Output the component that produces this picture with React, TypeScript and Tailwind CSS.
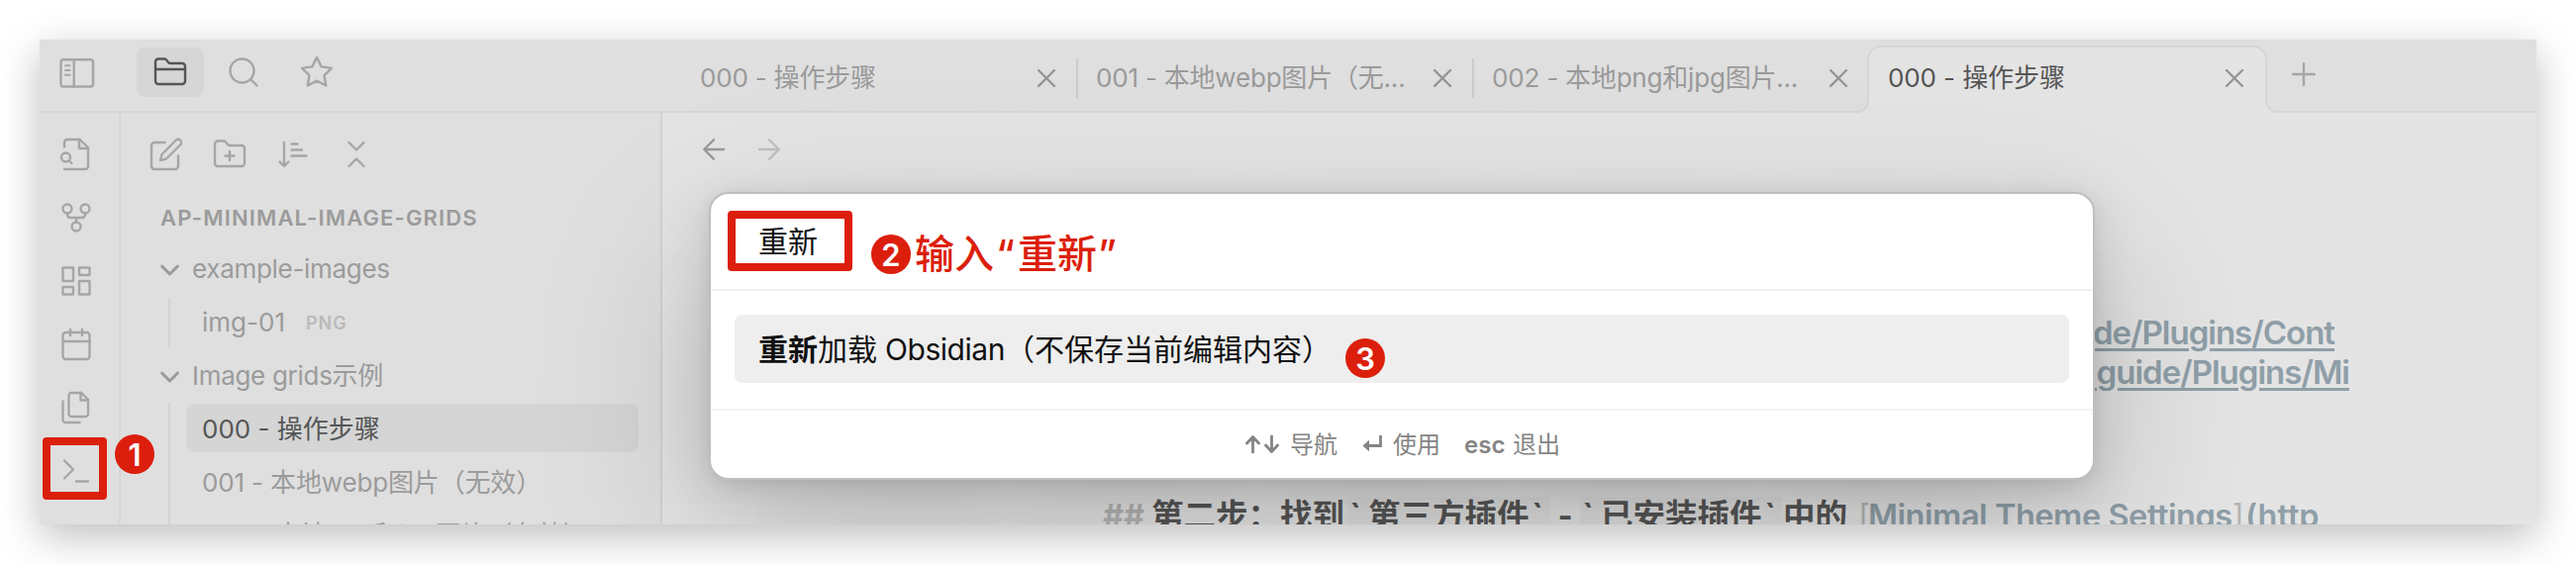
import React from "react";

type IconProps = { children: React.ReactNode; className?: string; sw?: number };

function Icon({ children, className = "size-[36px]", sw = 1.6 }: IconProps) {
  return (
    <svg
      className={"shrink-0 " + className}
      viewBox="0 0 24 24"
      fill="none"
      stroke="currentColor"
      strokeWidth={sw}
      strokeLinecap="round"
      strokeLinejoin="round"
    >
      {children}
    </svg>
  );
}

function Close() {
  return (
    <Icon className="size-[32px] text-[#959595]" sw={1.8}>
      <path d="M18 6 6 18M6 6l12 12" />
    </Icon>
  );
}

function Tab({ title, sep }: { title: string; sep?: boolean }) {
  return (
    <div className="relative flex h-full w-[400px] shrink-0 items-center justify-between pl-[19px] pr-[15px] text-[#9a9a9a]">
      <span className="whitespace-nowrap text-[26px] leading-[36px] tracking-[-0.2px]">{title}</span>
      <Close />
      {sep && <span className="absolute right-[-1px] top-[19px] h-[40px] w-[2px] bg-[#cbcbcb]" />}
    </div>
  );
}

function ActiveTab({ title }: { title: string }) {
  return (
    <div className="relative h-full w-[400px] shrink-0">
      <div className="absolute left-[-2px] top-[6px] h-[68px] w-[404px] rounded-t-[14px] border-2 border-b-0 border-[#d6d6d6] bg-[#e4e4e4]" />
      <div className="absolute left-[-12px] top-[62px] h-[12px] w-[12px] bg-[#e4e4e4]">
        <div className="h-full w-full rounded-br-[12px] border-b-2 border-r-2 border-[#d6d6d6] bg-[#dedede]" />
      </div>
      <div className="absolute right-[-12px] top-[62px] h-[12px] w-[12px] bg-[#e4e4e4]">
        <div className="h-full w-full rounded-bl-[12px] border-b-2 border-l-2 border-[#d6d6d6] bg-[#dfdfdf]" />
      </div>
      <div className="relative flex h-full items-center justify-between pl-[19px] pr-[15px] text-[#555]">
        <span className="whitespace-nowrap text-[26px] leading-[36px] tracking-[-0.1px]">{title}</span>
        <Close />
      </div>
    </div>
  );
}

function Badge({ n, className }: { n: string; className: string }) {
  return (
    <span className={"absolute flex size-[40px] items-center justify-center rounded-full bg-[#dc1f0d] text-[31px] font-semibold leading-none text-white " + className}>
      {n}
    </span>
  );
}

function Folder({ name }: { name: string }) {
  return (
    <div className="flex h-[54px] items-center pl-[36px]">
      <Icon className="size-[27px]" sw={2.6}>
        <path d="m5 9 7 7 7-7" />
      </Icon>
      <span className="-mt-px ml-[9px] whitespace-nowrap tracking-[-0.3px]">{name}</span>
    </div>
  );
}

function Code({ text }: { text: string }) {
  return (
    <span className="flex w-[205px] items-baseline bg-black/[0.02]">
      <span className="w-[21px] pr-[5px] text-center">`</span>
      <span className="w-[163px]">{text}</span>
      <span className="w-[21px] pr-[5px] text-center">`</span>
    </span>
  );
}

export default function App() {
  return (
    <div className="h-[570px] w-[2602px] overflow-hidden bg-white p-[40px] font-['Inter','Noto_Sans_CJK_SC',sans-serif]">
      <div className="h-[490px] w-[2522px] shadow-[0_12px_39px_rgba(0,0,0,0.26)]">
        <div className="relative flex h-full w-full flex-col overflow-hidden bg-[#dfdfdf]">
          <header className="flex h-[74px] shrink-0 border-b-2 border-[#d6d6d6]">
            <div className="flex w-[648px] shrink-0 items-start text-[#a6a6a6]">
              <svg className="ml-[19px] mt-[18px] h-[32px] w-[38px]" viewBox="0 0 38 32" fill="none" stroke="currentColor" strokeWidth="2.4" strokeLinecap="round">
                <rect x="2.500" y="2.200" width="32.500" height="27.300" rx="2.500" />
                <path d="M15.700 2.200v27.300" />
                <path d="M7 8.300h4.500M7 13h4.500M7 17.700h4.500" strokeWidth="2" />
              </svg>
              <div className="ml-[41px] mt-[8px] flex h-[50px] w-[68px] items-center justify-center rounded-[8px] bg-[#d6d6d6] text-[#555]">
                <Icon>
                  <path d="M4 20h16a2 2 0 0 0 2-2V8a2 2 0 0 0-2-2h-7.930a2 2 0 0 1-1.660-.9l-.82-1.200A2 2 0 0 0 7.930 3H4a2 2 0 0 0-2 2v13c0 1.100.9 2 2 2ZM2 10h20" />
                </Icon>
              </div>
              <Icon className="ml-[22px] mt-[15px] size-[36px]">
                <circle cx="11" cy="11" r="8" />
                <path d="m21 21-4.300-4.300" />
              </Icon>
              <Icon className="ml-[38px] mt-[15px] size-[36px]">
                <polygon points="12 2 15.09 8.26 22 9.27 17 14.14 18.18 21.02 12 17.77 5.82 21.02 7 14.14 2 9.27 8.91 8.26 12 2" />
              </Icon>
            </div>
            <div className="flex h-[78px] items-center">
              <Tab title="000 - 操作步骤" sep />
              <Tab title="001 - 本地webp图片（无..." sep />
              <Tab title="002 - 本地png和jpg图片..." />
              <ActiveTab title="000 - 操作步骤" />
              <Icon className="-mt-[8px] ml-[21px] size-[36px] text-[#a6a6a6]">
                <path d="M12 4.800v14.400M4.800 12h14.400" />
              </Icon>
            </div>
          </header>

          <div className="flex min-h-0 flex-1">
            <nav className="flex w-[82px] shrink-0 flex-col gap-[28px] border-r-2 border-[#d6d6d6] pl-[19px] pt-[24px] text-[#a6a6a6]">
              <Icon>
                <path d="M4 22h14a2 2 0 0 0 2-2V7.500L14.500 2H6a2 2 0 0 0-2 2v3" />
                <path d="M14 2v6h6" />
                <path d="M5 17a3 3 0 1 0 0-6 3 3 0 0 0 0 6zM9 18l-1.500-1.500" />
              </Icon>
              <Icon>
                <circle cx="12" cy="18" r="3" />
                <circle cx="6" cy="6" r="3" />
                <circle cx="18" cy="6" r="3" />
                <path d="M18 9v1a2 2 0 0 1-2 2H8a2 2 0 0 1-2-2V9M12 12v3" />
              </Icon>
              <Icon>
                <rect x="3" y="3" width="7" height="9" />
                <rect x="14" y="3" width="7" height="5" />
                <rect x="14" y="12" width="7" height="9" />
                <rect x="3" y="16" width="7" height="5" />
              </Icon>
              <Icon>
                <rect x="3" y="4" width="18" height="18" rx="2" />
                <path d="M16 2v4M8 2v4M3 10h18" />
              </Icon>
              <Icon>
                <path d="M15.500 2H8.600c-.4 0-.8.2-1.100.5-.3.3-.5.7-.5 1.100v12.800c0 .4.2.8.5 1.100.3.3.7.5 1.100.5h9.800c.4 0 .8-.2 1.100-.5.3-.3.5-.7.5-1.100V6.500L15.500 2z" />
                <path d="M3 7.600v12.800c0 .4.2.8.5 1.100.3.3.7.5 1.100.5h9.800M15 2v5h5" />
              </Icon>
              <Icon>
                <path d="m4 17 6-6-6-6M12 19h8" />
              </Icon>
            </nav>

            <aside className="w-[547px] shrink-0 border-r-2 border-[#d2d2d2] text-[26px] text-[#9b9b9b]">
              <div className="flex gap-[28px] pl-[28px] pt-[24px] text-[#a6a6a6]">
                <Icon>
                  <path d="M11 4H4a2 2 0 0 0-2 2v14a2 2 0 0 0 2 2h14a2 2 0 0 0 2-2v-7" />
                  <path d="M18.500 2.500a2.121 2.121 0 0 1 3 3L12 15l-4 1 1-4 9.500-9.500z" />
                </Icon>
                <Icon>
                  <path d="M4 20h16a2 2 0 0 0 2-2V8a2 2 0 0 0-2-2h-7.930a2 2 0 0 1-1.660-.9l-.82-1.200A2 2 0 0 0 7.930 3H4a2 2 0 0 0-2 2v13c0 1.100.9 2 2 2ZM12 10v6M9 13h6" />
                </Icon>
                <Icon>
                  <path d="m3 17 3 3 3-3M6 19V4M11 5h4M11 9h7M11 13h10" />
                </Icon>
                <Icon>
                  <path d="m7 20 5-5 5 5M7 4l5 5 5-5" />
                </Icon>
              </div>
              <div className="mt-[30px] pl-[40px] text-[22px] font-semibold leading-[32px] tracking-[1.15px]">AP-MINIMAL-IMAGE-GRIDS</div>
              <div className="mt-[9px]">
                <Folder name="example-images" />
                <div className="flex h-[54px] items-stretch pl-[48px]">
                  <div className="my-[2px] w-[2px] bg-[#d3d3d3]" />
                  <div className="flex items-center pb-[2px] pl-[32px]">
                    <span>img-01</span>
                    <span className="ml-[21px] mt-[3px] text-[18px] font-semibold tracking-[1px] text-[#bababa]">PNG</span>
                  </div>
                </div>
                <Folder name="Image grids示例" />
                <div className="flex pl-[48px]">
                  <div className="h-[150px] w-[2px] bg-[#d3d3d3]" />
                  <div className="pl-[16px] pt-[1px]">
                    <div className="flex h-[49px] w-[457px] items-center rounded-[8px] bg-[#d5d5d5] pl-[16px] pt-[2px] text-[#555]">000 - 操作步骤</div>
                    <div className="mt-[5px] flex h-[49px] items-center whitespace-nowrap pl-[16px] pt-[2px] tracking-[-0.15px]">001 - 本地webp图片（无效）</div>
                    <div className="mt-[5px] flex h-[49px] items-center whitespace-nowrap pl-[16px] tracking-[-0.2px]">002 - 本地png和jpg图片（有效）</div>
                  </div>
                </div>
              </div>
            </aside>

            <main className="flex-1 bg-[#e4e4e4]">
              <div className="flex gap-[24px] pl-[36px] pt-[21px]">
                <Icon className="size-[32px] text-[#999]" sw={1.8}>
                  <path d="M19.500 12H5M12 19.300l-7.300-7.300L12 4.700" />
                </Icon>
                <Icon className="size-[32px] text-[#bfbfbf]" sw={1.8}>
                  <path d="M4.500 12H19M12 4.700l7.300 7.300-7.300 7.300" />
                </Icon>
              </div>
              <div className="mt-[149px] w-[1704px] whitespace-nowrap text-[33px] font-semibold leading-[40px] tracking-[-1px] text-[#8f9fa8]">
                <div className="w-[1689px] text-right underline decoration-[3px] underline-offset-[4px]">minimal.guide/Plugins/Cont</div>
                <div className="w-[1704px] text-right underline decoration-[3px] underline-offset-[4px]">minimal.guide/Plugins/Mi</div>
              </div>
              <div className="mt-[106px] flex items-baseline whitespace-nowrap pl-[445px] text-[32.500px] font-bold leading-[40px] text-[#565656]">
                <span className="w-[49px] text-[#b4b4b4]">##</span>
                <span className="w-[198px]">第二步：找到</span>
                <Code text="第三方插件" />
                <span className="w-[30px] text-center">-</span>
                <Code text="已安装插件" />
                <span className="w-[76px]">中的</span>
                <span className="w-[10px] font-normal text-[#b4b4b4]">[</span>
                <span className="w-[368px] font-semibold tracking-[-0.45px] text-[#8f9fa8]">Minimal Theme Settings</span>
                <span className="w-[13px] font-normal text-[#b4b4b4]">]</span>
                <span className="font-semibold text-[#8f9fa8]">(http</span>
              </div>
            </main>
          </div>

          <section className="absolute left-[676px] top-[154px] flex h-[291px] w-[1400px] flex-col overflow-visible rounded-[20px] border-2 border-[#bfbfbf] bg-white text-[30px] text-[#111] shadow-[0_3.6px_14.6px_rgba(0,0,0,0.071),0_12.6px_49.4px_rgba(0,0,0,0.112),0_60px_180px_rgba(0,0,0,0.2)]">
            <div className="flex h-[98px] items-center border-b-2 border-[#f1f1f1] pl-[48px]">重新</div>
            <div className="h-[121px] border-b-2 border-[#f3f3f3] px-[24px] pt-[24px]">
              <div className="flex h-[69px] items-center whitespace-pre rounded-[8px] bg-[#eeeeee] pl-[24px] pt-[2px]">
                <b className="font-bold">重新</b>加载<span className="tracking-[-0.45px]"> Obsidian</span>（不保存当前编辑内容）
              </div>
            </div>
            <div className="flex flex-1 items-center pl-[537px] pt-[2px] text-[24px] text-[#848484]">
              <svg className="-mt-[2px] h-[20px] w-[38px]" viewBox="0 0 38 20" fill="none" stroke="currentColor" strokeWidth="2.8" strokeLinecap="round" strokeLinejoin="round">
                <path d="M10.500 18V3M4.500 9l6-6.500 6 6.500M29.500 2v15M23.500 11l6 6.500 6-6.500" />
              </svg>
              <span className="ml-[10px] w-[48px]">导航</span>
              <svg className="-mt-[2px] ml-[24px] h-[20px] w-[22px]" viewBox="0 0 22 20" fill="none" stroke="currentColor" strokeWidth="2.8">
                <path d="M19.500 1v10.500H6" />
                <path d="M7.500 6.500 2 11.500 7.500 16.500z" fill="currentColor" strokeWidth="1" />
              </svg>
              <span className="ml-[10px] w-[48px]">使用</span>
              <span className="ml-[24px] w-[49px] font-semibold">esc</span>
              <span>退出</span>
            </div>
          </section>

          <div className="absolute left-[3px] top-[402px] h-[63px] w-[65px] rounded-[4px] border-8 border-[#dc1f0d]" />
          <Badge n="1" className="left-[76px] top-[399px]" />
          <div className="absolute left-[695px] top-[173px] h-[61px] w-[126px] rounded-[4px] border-8 border-[#dc1f0d]" />
          <Badge n="2" className="left-[840px] top-[197px]" />
          <div className="absolute left-[884px] top-[192px] flex whitespace-nowrap text-[40px] font-medium leading-[50px] text-[#dc1f0d]">
            <span className="w-[82px]">输入</span>
            <span className="w-[22px]">“</span>
            <span className="w-[81px]">重新</span>
            <span>”</span>
          </div>
          <Badge n="3" className="left-[1319px] top-[302px]" />
        </div>
      </div>
    </div>
  );
}
